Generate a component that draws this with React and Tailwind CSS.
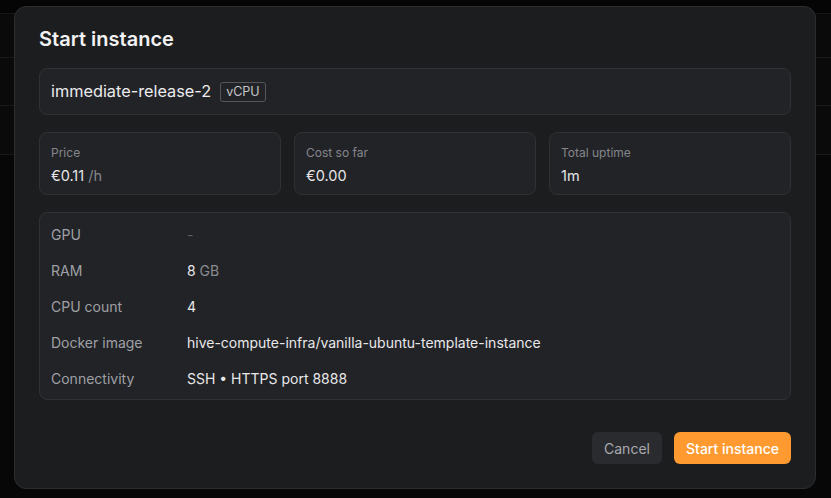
import React from "react";

const rows = [
  { label: "GPU", value: <span className="text-[#5f6066]">-</span> },
  { label: "RAM", value: <><span>8</span> <span className="text-[#8b8c91]">GB</span></> },
  { label: "CPU count", value: "4" },
  { label: "Docker image", value: "hive-compute-infra/vanilla-ubuntu-template-instance" },
  { label: "Connectivity", value: "SSH • HTTPS port 8888" },
];

function Stat({ label, children }) {
  return (
    <div className="h-[63px] rounded-lg border border-[#303135] bg-[#222327] pl-[11px] pr-3 pt-[12px]">
      <div className="text-[12px] leading-[16px] text-[#85868b]">{label}</div>
      <div className="mt-[5px] text-[14.5px] leading-[20px] text-[#e6e6e8]">{children}</div>
    </div>
  );
}

export default function App() {
  return (
    <div
      className="relative h-[498px] w-[831px] overflow-hidden bg-[#070707]"
      style={{ fontFamily: "Inter, 'Noto Sans', sans-serif" }}
    >
      <div className="flex flex-col">
        <div className="h-[14px] border-b border-[#161616] bg-[#050505]" />
        <div className="h-[44px] border-b border-[#181818] bg-[#0a0a0a]" />
        <div className="h-[48px] border-b border-[#181818] bg-[#0a0a0a]" />
        <div className="h-[49px] border-b border-[#181818] bg-[#0a0a0a]" />
      </div>

      <div className="absolute left-[14px] top-[6px] w-[802px] rounded-[12px] border border-[#2c2d31] bg-[#1c1d1f] px-6 pb-6 pt-[18px]">
        <h2 className="text-[20px] font-semibold leading-[28px] text-[#f2f2f3]">Start instance</h2>

        <div className="mt-[15px] flex h-[47px] items-center gap-[9px] rounded-lg border border-[#303135] bg-[#222327] pl-[11px] pr-3">
          <span className="text-[16.3px] text-[#ececee]">immediate-release-2</span>
          <span className="rounded-[3px] border border-[#55565b] px-[5px] text-[12.5px] leading-[18px] text-[#c4c5c9]">vCPU</span>
        </div>

        <div className="mt-[17px] grid grid-cols-3 gap-[13px]">
          <Stat label="Price">
            €0.11 <span className="text-[#85868b]">/h</span>
          </Stat>
          <Stat label="Cost so far">€0.00</Stat>
          <Stat label="Total uptime">1m</Stat>
        </div>

        <div className="mt-[17px] rounded-lg border border-[#303135] bg-[#222327] py-[3px] pl-[11px] pr-3">
          {rows.map((r) => (
            <div key={r.label} className="flex h-9 items-center text-[14px]">
              <div className="w-[136px] text-[#9fa0a5]">{r.label}</div>
              <div className="text-[#e8e8ea]">{r.value}</div>
            </div>
          ))}
        </div>

        <div className="mt-[32px] flex justify-end gap-3">
          <button className="h-8 w-[70px] rounded-md bg-[#2a2b2f] text-[14px] text-[#a9aaae]">Cancel</button>
          <button className="h-8 w-[117px] rounded-md bg-[#ff9a30] text-[14px] font-medium text-white">Start instance</button>
        </div>
      </div>
    </div>
  );
}
